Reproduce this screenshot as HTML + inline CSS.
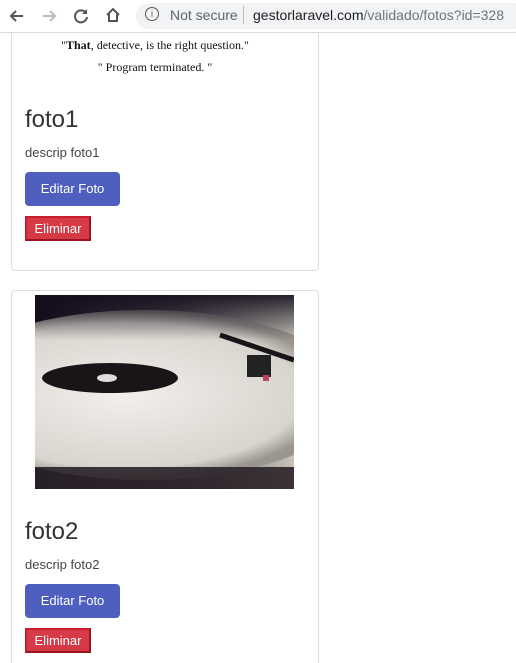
<!DOCTYPE html>
<html style="width:516px;height:663px;overflow:hidden"><head><style>
body{margin:0;width:516px;height:663px;overflow:hidden;background:#fff;font-family:"Liberation Sans",sans-serif;position:relative}
.bar{position:absolute;left:0;top:0;width:516px;height:32px;background:#fff;border-bottom:1px solid #dadce0}
.url{position:absolute;left:136px;top:3px;width:390px;height:26px;background:#f1f3f4;border-radius:13px}
.card{position:absolute;left:11px;width:306px;border:1px solid #ddd;border-radius:4px;background:#fff}
h2{position:absolute;left:25px;margin:0;font-weight:normal;font-size:24px;color:#333}
.d{position:absolute;left:25px;font-size:13px;color:#444}
.ed{position:absolute;left:25px;width:95px;height:34px;background:#4f5fbf;border-radius:4px;color:#fff;font-size:13px;line-height:34px;text-align:center}
.el{position:absolute;left:25px;width:62px;height:21px;background:#d63a47;border:2px solid #9a1420;border-top-color:#c81e2c;border-left-color:#c81e2c;color:#fff;font-size:13px;line-height:21px;text-align:center;box-sizing:content-box}
</style></head><body>
<div class="card" style="top:20px;height:249px"></div>
<div class="card" style="top:290px;height:373px;border-bottom:none;border-radius:4px 4px 0 0"></div>
<div style="position:absolute;left:0;top:38px;width:310px;text-align:center;font-family:'Liberation Serif',serif;font-size:12px;color:#111">"<b>That</b>, detective, is the right question."</div>
<div style="position:absolute;left:0;top:60px;width:310px;text-align:center;font-family:'Liberation Serif',serif;font-size:12px;color:#111">" Program terminated. "</div>
<h2 style="top:106px">foto1</h2>
<div class="d" style="top:145px">descrip foto1</div>
<div class="ed" style="top:172px">Editar Foto</div>
<div class="el" style="top:216px">Eliminar</div>
<svg style="position:absolute;left:35px;top:295px" width="259" height="194">
<defs><radialGradient id="g" cx="0.45" cy="0.5" r="0.5"><stop offset="0" stop-color="#f2f0ec"/><stop offset="0.85" stop-color="#d8d4ce"/><stop offset="1" stop-color="#9a958f"/></radialGradient>
<linearGradient id="bg" x1="0" y1="0" x2="1" y2="0"><stop offset="0" stop-color="#120c1a"/><stop offset="0.5" stop-color="#4a4450"/><stop offset="1" stop-color="#c8c4b8"/></linearGradient>
<linearGradient id="tp" x1="0" y1="0" x2="0" y2="1"><stop offset="0" stop-color="#140e1c" stop-opacity="0.9"/><stop offset="1" stop-color="#140e1c" stop-opacity="0"/></linearGradient></defs>
<rect width="259" height="194" fill="url(#bg)"/>
<ellipse cx="110" cy="100" rx="210" ry="85" fill="url(#g)"/>
<rect x="0" y="0" width="259" height="45" fill="url(#tp)"/>
<rect x="0" y="172" width="259" height="22" fill="#2a2228" opacity="0.9"/>
<ellipse cx="75" cy="83" rx="68" ry="15" fill="#1a1418"/>
<ellipse cx="72" cy="83" rx="10" ry="4" fill="#ddd"/>
<line x1="185" y1="40" x2="259" y2="65" stroke="#1a1418" stroke-width="5"/>
<rect x="212" y="60" width="24" height="22" fill="#222"/>
<rect x="228" y="80" width="6" height="6" fill="#c04060"/>
</svg>
<h2 style="top:518px">foto2</h2>
<div class="d" style="top:557px">descrip foto2</div>
<div class="ed" style="top:584px">Editar Foto</div>
<div class="el" style="top:628px">Eliminar</div>
<div class="bar"><div class="url"></div>
<svg style="position:absolute;left:8px;top:7px" width="18" height="18" viewBox="0 0 18 18"><path d="M15 9H3M8 4L3 9l5 5" stroke="#555" stroke-width="2" fill="none"/></svg>
<svg style="position:absolute;left:40px;top:7px" width="18" height="18" viewBox="0 0 18 18"><path d="M3 9h12M10 4l5 5-5 5" stroke="#bbb" stroke-width="2" fill="none"/></svg>
<svg style="position:absolute;left:72px;top:7px" width="18" height="18" viewBox="0 0 18 18"><path d="M14 6A6 6 0 1 0 15 10" stroke="#555" stroke-width="2" fill="none"/><path d="M15 2v5h-5z" fill="#555"/></svg>
<svg style="position:absolute;left:104px;top:6px" width="18" height="18" viewBox="0 0 18 18"><path d="M3 9L9 3l6 6M5 8v7h8V8" stroke="#555" stroke-width="2" fill="none"/></svg>
<span style="position:absolute;left:145px;top:7px;width:12px;height:12px;border:1.5px solid #555;border-radius:50%;font-size:9px;line-height:12px;text-align:center;color:#555">i</span>
<span style="position:absolute;left:170px;top:7px;font-size:14px;color:#5f6368">Not secure</span>
<span style="position:absolute;left:243px;top:6px;width:1px;height:18px;background:#bbb"></span>
<span style="position:absolute;left:253px;top:7px;font-size:14px;color:#202124">gestorlaravel.com<span style="color:#70757a">/validado/fotos?id=328</span></span>
</div>
</body></html>
